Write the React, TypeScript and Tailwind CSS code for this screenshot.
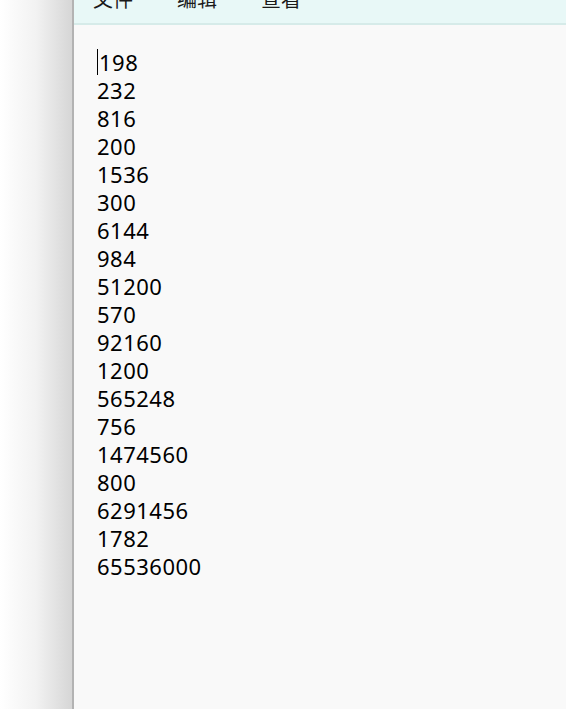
import React from "react"

const LINES = [
  "198", "232", "816", "200", "1536", "300", "6144", "984", "51200", "570",
  "92160", "1200", "565248", "756", "1474560", "800", "6291456", "1782", "65536000",
]

export default function App() {
  return (
    <div className="flex h-[709px] w-[566px] overflow-hidden bg-white">
      {/* desktop shadow on the left */}
      <div className="w-[72px] shrink-0 bg-gradient-to-r from-white via-[#f2f2f2] to-[#d6d6d6]" />
      <div className="flex flex-1 flex-col border-l-2 border-[#b3b3b3] bg-[#f9f9f9]">
        {/* menu bar, cut off at the top */}
        <div className="flex h-[25px] shrink-0 items-start gap-[44px] overflow-hidden border-b-2 border-[#d6ebe9] bg-[#e8f8f7] pl-[19px] text-[20px] leading-none text-[#1a1a1a] [font-family:'Noto_Sans_CJK_SC',sans-serif]">
          <span className="-mt-[11px]">文件</span>
          <span className="-mt-[11px]">编辑</span>
          <span className="-mt-[11px]">查看</span>
        </div>
        <div className="flex flex-col pl-[23px] pt-[23px] text-[22px] leading-[28px] tracking-[0.5px] text-black [font-family:'Noto_Sans',sans-serif]">
          {LINES.map((l, i) => (
            <div key={i} className="flex items-center">
              {i === 0 && <span className="mr-px h-[26px] w-px bg-black" />}
              <span>{l}</span>
            </div>
          ))}
        </div>
      </div>
    </div>
  )
}
